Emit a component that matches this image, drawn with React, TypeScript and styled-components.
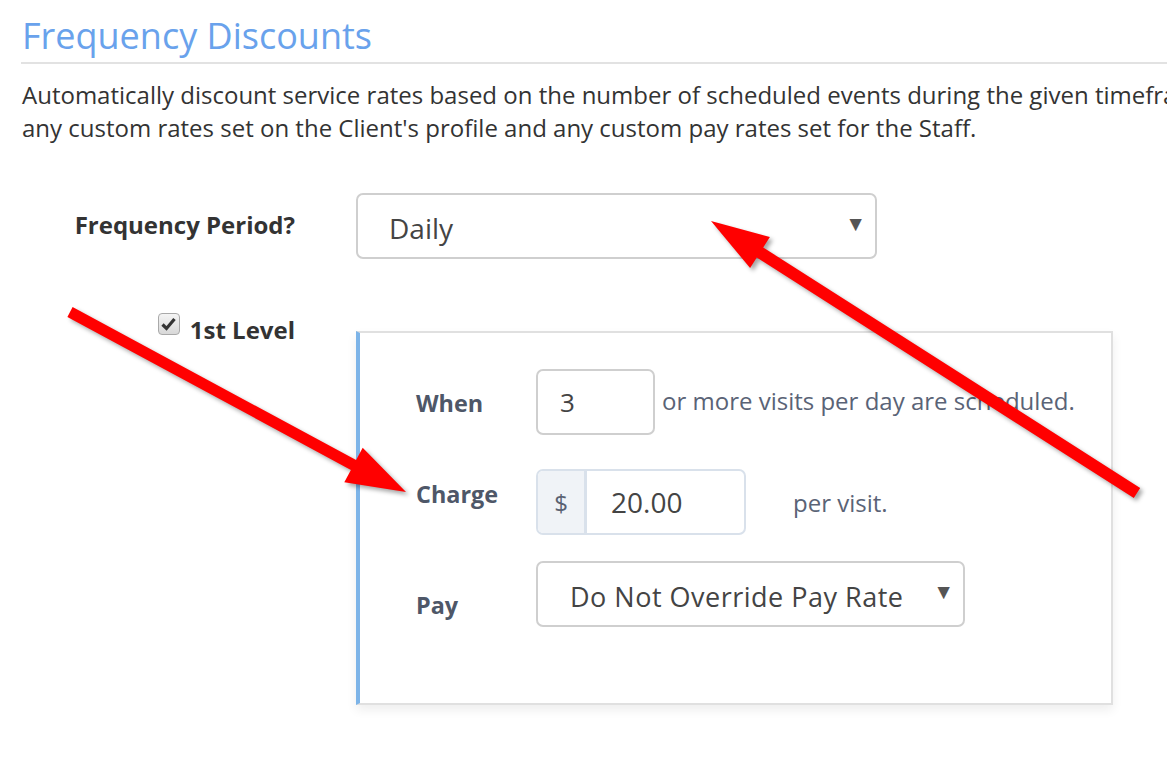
import styled, { createGlobalStyle } from "styled-components";

const GlobalStyle = createGlobalStyle`
  html, body {
    margin: 0;
    padding: 0;
    background: #fff;
  }
  body {
    font-family: "Open Sans", "Liberation Sans", sans-serif;
    color: #333;
  }
`;

const Page = styled.div`
  position: relative;
  width: 1167px;
  height: 769px;
  overflow: hidden;
  padding-left: 21px;
  box-sizing: border-box;
`;

const Heading = styled.h2`
  margin: 0;
  padding: 16px 0 6px 1px;
  font-size: 36px;
  font-weight: 400;
  line-height: 40px;
  color: #69a2ec;
  border-bottom: 2px solid #e2e2e2;
  width: 1300px;
`;

const Intro = styled.p`
  margin: 14px 0 0 1px;
  font-size: 24px;
  line-height: 33px;
  color: #333;
  white-space: nowrap;
`;

const FieldRow = styled.div<{ $top: number }>`
  display: grid;
  grid-template-columns: 274px 520px;
  column-gap: 61px;
  margin-top: ${(p) => p.$top}px;
`;

const FieldLabel = styled.label<{ $pad?: number }>`
  display: flex;
  align-items: center;
  justify-content: flex-end;
  gap: 10px;
  font-size: 24px;
  line-height: 33px;
  font-weight: 700;
  color: #333;
  padding-top: ${(p) => p.$pad ?? 0}px;
  align-self: start;
`;

const SelectBox = styled.div<{ $width: number; $pad: number }>`
  display: flex;
  align-items: center;
  justify-content: space-between;
  width: ${(p) => p.$width}px;
  height: 66px;
  box-sizing: border-box;
  border: 2px solid #cfcfcf;
  border-radius: 7px;
  background: #fff;
  padding: 0 9px 0 ${(p) => p.$pad}px;
`;

const SelectValue = styled.span<{ $narrow?: boolean }>`
  font-size: ${(p) => (p.$narrow ? 27 : 28)}px;
  color: #444;
  letter-spacing: ${(p) => (p.$narrow ? "0.5px" : "0")};
  padding-top: 4px;
`;

const Caret = styled.span`
  font-size: 21px;
  color: #555;
  line-height: 1;
  margin-bottom: 5px;
`;

const Check = styled.span`
  display: inline-flex;
  align-items: center;
  justify-content: center;
  align-self: flex-start;
  width: 22px;
  height: 22px;
  box-sizing: border-box;
  border: 1px solid #a9a9a9;
  border-radius: 4px;
  background: linear-gradient(#f4f4f4, #d8d8d8);
`;

const LevelBlock = styled.div`
  margin-top: 18px;
`;

const Panel = styled.div`
  width: 757px;
  box-sizing: border-box;
  border: 2px solid #e0e0e0;
  border-left: 4px solid #7db4e8;
  background: #fff;
  box-shadow: 0 5px 10px rgba(0, 0, 0, 0.07);
  padding: 36px 0 76px 56px;
  display: flex;
  flex-direction: column;
`;

const PanelRow = styled.div<{ $top: number }>`
  display: grid;
  grid-template-columns: 120px auto;
  align-items: start;
  margin-top: ${(p) => p.$top}px;
`;

const RowLabel = styled.div<{ $pad: number }>`
  font-size: 23.4px;
  line-height: 32px;
  font-weight: 700;
  color: #4e5768;
  padding-top: ${(p) => p.$pad}px;
`;

const RowBody = styled.div`
  display: flex;
  align-items: center;
`;

const TextInput = styled.div<{ $width: number }>`
  width: ${(p) => p.$width}px;
  height: 66px;
  box-sizing: border-box;
  border: 2px solid #cfcfcf;
  border-radius: 7px;
  display: flex;
  align-items: center;
  padding-left: 22px;
  font-size: 26px;
  color: #444;
`;

const InputGroup = styled.div`
  display: flex;
  height: 66px;
  box-sizing: border-box;
  border: 2px solid #d9e1eb;
  border-radius: 7px;
  overflow: hidden;
`;

const Addon = styled.span`
  width: 46px;
  display: flex;
  align-items: center;
  justify-content: center;
  background: #f0f3f7;
  border-right: 3px solid #d9e1eb;
  font-size: 24px;
  color: #5a6272;
`;

const GroupInput = styled.span`
  width: 157px;
  display: flex;
  align-items: center;
  padding-left: 24px;
  box-sizing: border-box;
  font-size: 28px;
  color: #444;
`;

const Hint = styled.span<{ $gap: number; $lift?: number }>`
  margin-left: ${(p) => p.$gap}px;
  font-size: 24px;
  color: #5a6376;
  padding-bottom: ${(p) => p.$lift ?? 0}px;
`;

const Arrows = styled.svg`
  position: absolute;
  left: 0;
  top: 0;
  width: 1167px;
  height: 769px;
  pointer-events: none;
  filter: drop-shadow(3px 3px 2px rgba(0, 0, 0, 0.35));
`;

export default function App() {
  return (
    <>
      <GlobalStyle />
      <Page>
        <Heading>Frequency Discounts</Heading>
        <Intro>
          Automatically discount service rates based on the number of scheduled events during the given timeframe.
          <br />
          any custom rates set on the Client's profile and any custom pay rates set for the Staff.
        </Intro>

        <FieldRow $top={49}>
          <FieldLabel $pad={15}>Frequency Period?</FieldLabel>
          <SelectBox $width={521} $pad={31}>
            <SelectValue>Daily</SelectValue>
            <Caret>▼</Caret>
          </SelectBox>
        </FieldRow>

        <FieldRow $top={54}>
          <FieldLabel>
            <Check>
              <svg width="15" height="14" viewBox="0 0 15 14">
                <path d="M1.5 7.5 L5.5 11.5 L13.5 2" fill="none" stroke="#333" strokeWidth="3.2" />
              </svg>
            </Check>
            1st Level
          </FieldLabel>
          <LevelBlock>
            <Panel>
              <PanelRow $top={0}>
                <RowLabel $pad={18}>When</RowLabel>
                <RowBody>
                  <TextInput $width={119}>3</TextInput>
                  <Hint $gap={7} $lift={4}>or more visits per day are scheduled.</Hint>
                </RowBody>
              </PanelRow>

              <PanelRow $top={34}>
                <RowLabel $pad={9}>Charge</RowLabel>
                <RowBody>
                  <InputGroup>
                    <Addon>$</Addon>
                    <GroupInput>20.00</GroupInput>
                  </InputGroup>
                  <Hint $gap={47}>per visit.</Hint>
                </RowBody>
              </PanelRow>

              <PanelRow $top={26}>
                <RowLabel $pad={28}>Pay</RowLabel>
                <RowBody>
                  <SelectBox $width={429} $pad={32}>
                    <SelectValue $narrow>Do Not Override Pay Rate</SelectValue>
                    <Caret>▼</Caret>
                  </SelectBox>
                </RowBody>
              </PanelRow>
            </Panel>
          </LevelBlock>
        </FieldRow>

        <Arrows viewBox="0 0 1167 769">
          <polygon
            fill="#ff0000"
            points="72.6,307.1 356.1,460.1 362.7,447.8 406,492 344.3,482.2 350.9,469.9 67.4,316.9"
          />
          <polygon
            fill="#ff0000"
            points="711,221 769.9,237 763.2,247.4 1140.2,487.9 1133.8,498.1 756.8,257.6 750.1,268"
          />
        </Arrows>
      </Page>
    </>
  );
}
